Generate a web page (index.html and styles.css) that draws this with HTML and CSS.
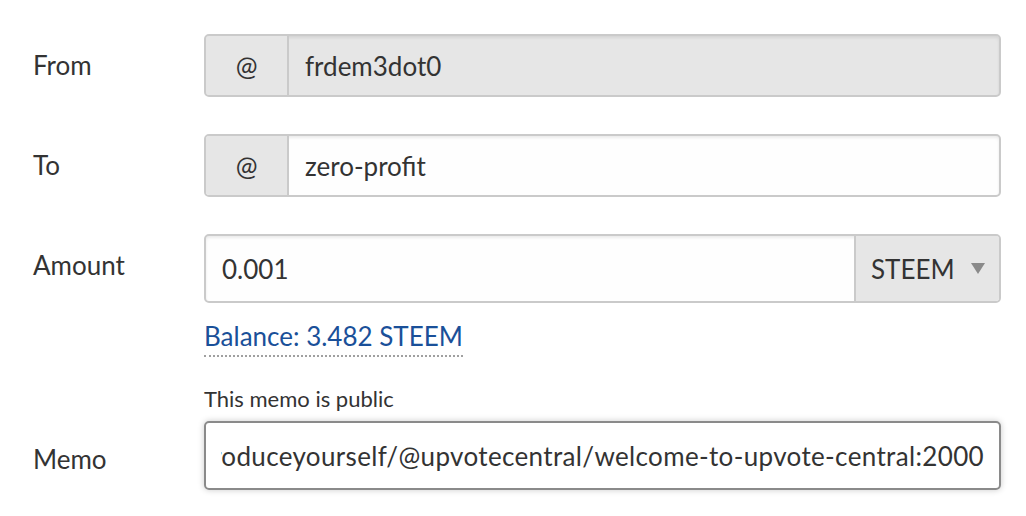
FILE: index.html
```html
<!DOCTYPE html>
<html lang="en">
<head>
<meta charset="utf-8">
<title>Transfer</title>
<link rel="stylesheet" href="styles.css">
</head>
<body>
<form class="transfer">
  <div class="row row-from">
    <div class="label">From</div>
    <div class="group disabled">
      <span class="addon">@</span>
      <span class="field">frdem3dot0</span>
    </div>
  </div>
  <div class="row row-to">
    <div class="label">To</div>
    <div class="group">
      <span class="addon">@</span>
      <span class="field">zero-profit</span>
    </div>
  </div>
  <div class="row row-amount">
    <div class="label">Amount</div>
    <div class="cell">
      <div class="group tall">
        <span class="field">0.001</span>
        <span class="select">STEEM<span class="caret"></span></span>
      </div>
      <div class="balance"><a class="balance-link">Balance: 3.482 STEEM</a></div>
    </div>
  </div>
  <div class="row row-memo">
    <div class="label memo-label">Memo</div>
    <div class="cell">
      <div class="note">This memo is public</div>
      <div class="memo">
        <div class="memo-clip"><span class="memo-text">introduceyourself/@upvotecentral/welcome-to-upvote-central:2000</span></div>
      </div>
    </div>
  </div>
</form>
</body>
</html>
```
FILE: styles.css
```css
html, body {
  margin: 0;
  padding: 0;
  background: #ffffff;
}
body {
  font-family: Lato, "Source Sans Pro", "Liberation Sans", sans-serif;
  font-size: 26px;
  color: #333333;
  width: 1026px;
  height: 516px;
  overflow: hidden;
}
.transfer {
  padding: 34px 25px 0 33px;
}
.row {
  display: grid;
  grid-template-columns: 171px minmax(0, 1fr);
}
.cell {
  min-width: 0;
}
.row-from, .row-to {
  margin-bottom: 37px;
}
.label {
  line-height: 30px;
  padding-top: 16px;
}
.memo-label {
  padding-top: 93px;
}
.group {
  display: flex;
  height: 63px;
  box-sizing: border-box;
  border: 2px solid #cacaca;
  border-radius: 5px;
  background: #fefefe;
  box-shadow: inset 0 2px 3px rgba(10, 10, 10, 0.08);
  overflow: hidden;
}
.group.tall {
  height: 69px;
}
.group.disabled {
  background: #e6e6e6;
}
.addon {
  width: 81px;
  flex: 0 0 81px;
  display: flex;
  align-items: center;
  justify-content: center;
  background: #e6e6e6;
  border-right: 2px solid #cacaca;
}
.field {
  flex: 1;
  display: flex;
  align-items: center;
  padding: 0 16px;
}
.select {
  flex: 0 0 145px;
  box-sizing: border-box;
  display: flex;
  align-items: center;
  padding-left: 15px;
  background: #e6e6e6;
  border-left: 2px solid #cacaca;
}
.caret {
  width: 0;
  height: 0;
  margin-left: 16px;
  border-left: 7px solid transparent;
  border-right: 7px solid transparent;
  border-top: 11px solid #8a8a8a;
}
.balance {
  padding-top: 18px;
  line-height: 30px;
}
.balance-link {
  color: #1a5099;
  border-bottom: 2px dotted #a0a0a0;
  padding-bottom: 3px;
}
.note {
  margin-top: 34px;
  font-size: 22px;
  line-height: 28px;
  margin-bottom: 8px;
}
.memo {
  height: 69px;
  box-sizing: border-box;
  border: 2px solid #8a8a8a;
  border-radius: 5px;
  box-shadow: 0 0 6px #cacaca;
  padding: 0 15px;
  display: flex;
  align-items: center;
}
.memo-clip {
  flex: 1;
  min-width: 0;
  overflow: hidden;
  display: flex;
  justify-content: flex-end;
}
.memo-text {
  flex-shrink: 0;
  white-space: nowrap;
  letter-spacing: 0.35px;
}
```
